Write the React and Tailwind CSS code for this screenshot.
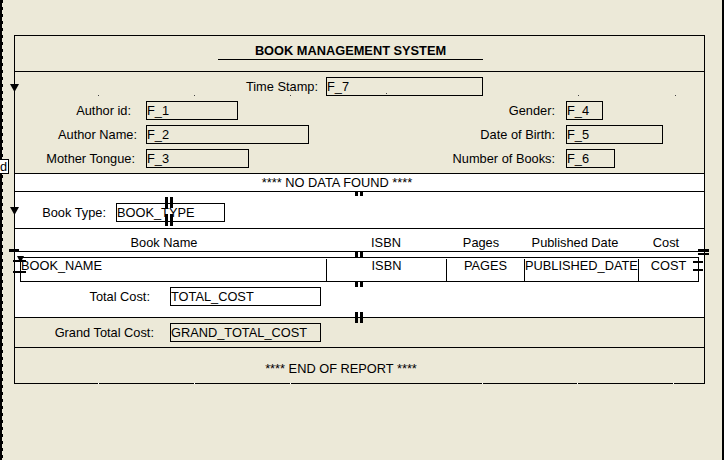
import React from "react";

function Field({ className = "", children }) {
  return (
    <div className={"h-[19px] border border-black leading-[17px] whitespace-nowrap overflow-hidden " + className}>
      {children}
    </div>
  );
}

function Label({ className = "", children }) {
  return (
    <div className={"pt-[2px] leading-[15px] text-right whitespace-nowrap " + className}>
      {children}
    </div>
  );
}

function DownArrow({ className = "" }) {
  return (
    <svg className={"absolute " + className} width="9" height="8" viewBox="0 0 9 8">
      <polygon points="0,0 9,0 4.5,8" fill="#000" />
    </svg>
  );
}

// the little "||" anchor marks Reports draws between frames
function Anchor({ className = "" }) {
  return (
    <div className={"absolute flex gap-[2px] " + className}>
      <span className="w-[3px] h-full bg-black" />
      <span className="w-[3px] h-full bg-black" />
    </div>
  );
}

function Bar({ className = "" }) {
  return <div className={"absolute bg-black " + className} />;
}

function Dot({ className = "" }) {
  return <div className={"absolute w-[1px] h-[1px] " + className} />;
}

export default function App() {
  return (
    <div className="relative flex w-[724px] h-[460px] bg-[#ece9d8] text-black text-[12.8px] font-['Liberation_Sans',Arial,sans-serif] overflow-hidden">
      {/* RULER */}
      <div className="flex w-[3px] h-full">
        <div className="w-[2px] h-full bg-black" />
        <div className="w-[1px] h-full bg-[image:repeating-linear-gradient(to_bottom,#000_0px,#000_3px,transparent_3px,transparent_7px)]" />
      </div>

      {/* CANVAS */}
      <div className="flex-1 border-r-2 border-black pt-[35px] pl-[11px]">
        <div className="relative w-[691px] h-[349px] border border-black">
          {/* TITLE */}
          <div className="h-[36px] border-b border-black">
            <div className="ml-[203px] w-[265px] pt-[7px] border-b border-black text-center font-bold leading-[16px] whitespace-nowrap">
              BOOK MANAGEMENT SYSTEM
            </div>
          </div>

          {/* AUTHOR FIELDS */}
          <div className="h-[102px] border-b border-black pt-[5px] flex flex-col gap-[5px]">
            <div className="flex items-start">
              <Label className="w-[303px]">Time Stamp:</Label>
              <Field className="ml-[8px] w-[157px]">F_7</Field>
            </div>
            <div className="flex items-start">
              <div className="flex items-start w-[425px]">
                <Label className="w-[116px]">Author id:</Label>
                <Field className="ml-[15px] w-[92px]">F_1</Field>
              </div>
              <Label className="w-[115px]">Gender:</Label>
              <Field className="ml-[11px] w-[37px]">F_4</Field>
            </div>
            <div className="flex items-start">
              <div className="flex items-start w-[425px]">
                <Label className="w-[122px]">Author Name:</Label>
                <Field className="ml-[9px] w-[163px]">F_2</Field>
              </div>
              <Label className="w-[115px]">Date of Birth:</Label>
              <Field className="ml-[11px] w-[97px]">F_5</Field>
            </div>
            <div className="flex items-start">
              <div className="flex items-start w-[425px]">
                <Label className="w-[120px]">Mother Tongue:</Label>
                <Field className="ml-[11px] w-[103px]">F_3</Field>
              </div>
              <Label className="w-[115px]">Number of Books:</Label>
              <Field className="ml-[11px] w-[49px]">F_6</Field>
            </div>
          </div>

          {/* NO DATA */}
          <div className="h-[18px] border-b border-black bg-white">
            <div className="w-[644px] text-center leading-[17px] whitespace-nowrap">**** NO DATA FOUND ****</div>
          </div>

          {/* BOOK TYPE */}
          <div className="h-[37px] border-b border-black bg-white pt-[11px] flex items-start">
            <Label className="w-[91px]">Book Type:</Label>
            <Field className="ml-[10px] w-[109px] bg-white">BOOK_TYPE</Field>
          </div>

          {/* DETAIL */}
          <div className="h-[89px] border-b border-black bg-white">
            <div className="h-[23px] border-b border-black pt-[6px] flex leading-[15px] whitespace-nowrap">
              <div className="ml-[89px] w-[120px] flex justify-center">Book Name</div>
              <div className="ml-[132px] w-[60px] flex justify-center">ISBN</div>
              <div className="ml-[35px] w-[60px] flex justify-center">Pages</div>
              <div className="ml-[9px] w-[110px] flex justify-center">Published Date</div>
              <div className="ml-[16px] w-[40px] flex justify-center">Cost</div>
            </div>
            <div className="ml-[5px] mt-[5px] w-[679px] h-[25px] border border-black flex pt-[1px] leading-[14px] whitespace-nowrap">
              <div className="w-[305px] overflow-hidden">BOOK_NAME</div>
              <div className="w-[120px] border-l border-black text-center overflow-hidden">ISBN</div>
              <div className="w-[78px] border-l border-black text-center overflow-hidden">PAGES</div>
              <div className="w-[114px] border-l border-black overflow-hidden">PUBLISHED_DATE</div>
              <div className="flex-1 border-l border-black text-center overflow-hidden">COST</div>
            </div>
            <div className="mt-[5px] flex items-start">
              <Label className="w-[135px]">Total Cost:</Label>
              <Field className="ml-[20px] w-[151px] bg-white">TOTAL_COST</Field>
            </div>
          </div>

          {/* GRAND TOTAL */}
          <div className="h-[30px] border-b border-black pt-[5px] flex items-start">
            <Label className="w-[139px]">Grand Total Cost:</Label>
            <Field className="ml-[16px] w-[151px]">GRAND_TOTAL_COST</Field>
          </div>

          {/* END */}
          <div className="h-[35px] pt-[13px]">
            <div className="w-[652px] text-center leading-[15px] whitespace-nowrap">**** END OF REPORT ****</div>
          </div>

          {/* OVERLAYS: arrows, anchors, handles */}
          <DownArrow className="left-[-5px] top-[48px]" />
          <DownArrow className="left-[-5px] top-[171px]" />
          <svg className="absolute left-[2px] top-[220px]" width="7" height="7" viewBox="0 0 7 7">
            <polygon points="0,0 7,0 3.5,7" fill="#000" />
          </svg>

          <Bar className="left-[-6px] top-[213px] w-[10px] h-[3px]" />
          <Bar className="left-[-2px] top-[224px] w-[13px] h-[2px]" />
          <Bar className="left-[-2px] top-[235px] w-[13px] h-[2px]" />

          <Bar className="left-[683px] top-[213px] w-[11px] h-[3px]" />
          <Bar className="left-[683px] top-[217px] w-[11px] h-[2px]" />
          <Bar className="left-[678px] top-[225px] w-[10px] h-[2px]" />
          <Bar className="left-[678px] top-[233px] w-[10px] h-[2px]" />

          <Anchor className="left-[340px] top-[155px] h-[5px]" />
          <Anchor className="left-[340px] top-[215px] h-[6px]" />
          <Anchor className="left-[340px] top-[245px] h-[6px]" />
          <Anchor className="left-[340px] top-[276px] h-[11px]" />
          <Anchor className="left-[150px] top-[161px] h-[11px]" />
          <Anchor className="left-[150px] top-[178px] h-[12px]" />

          {/* grid dots */}
          <Dot className="left-[83px] top-[59px] bg-[#444]" />
          <Dot className="left-[179px] top-[59px] bg-[#444]" />
          <Dot className="left-[275px] top-[59px] bg-[#444]" />
          <Dot className="left-[371px] top-[57px] bg-[#444]" />
          <Dot className="left-[563px] top-[59px] bg-[#444]" />
          <Dot className="left-[660px] top-[59px] bg-[#444]" />
          <Dot className="left-[83px] top-[347px] bg-white" />
          <Dot className="left-[179px] top-[347px] bg-white" />
          <Dot className="left-[275px] top-[347px] bg-white" />
          <Dot className="left-[467px] top-[347px] bg-white" />
          <Dot className="left-[562px] top-[347px] bg-white" />
          <Dot className="left-[658px] top-[347px] bg-white" />
        </div>
      </div>

      {/* TOOLTIP stub at the left edge */}
      <div className="absolute left-0 top-[159px] w-[9px] h-[15px] bg-white border border-l-0 border-black leading-[13px] overflow-hidden">
        d
      </div>
    </div>
  );
}
